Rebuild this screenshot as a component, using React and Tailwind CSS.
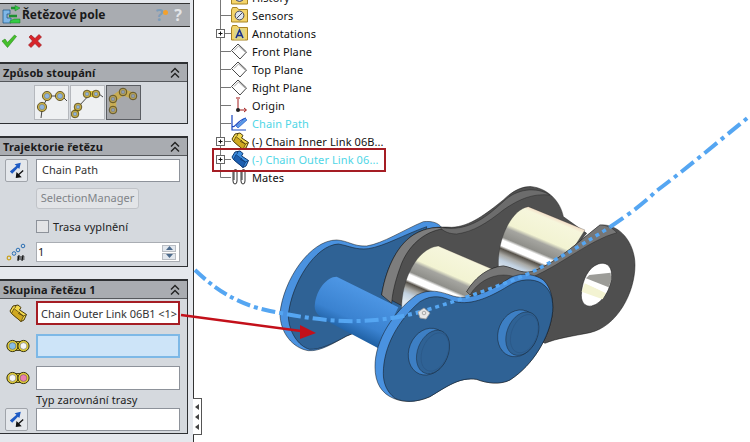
import React from "react";

const font = { fontFamily: '"Noto Sans", "DejaVu Sans", sans-serif' };

function Chevrons() {
  return (
    <svg width="12" height="14" viewBox="0 0 12 14" fill="none" stroke="#222" strokeWidth="1.4">
      <path d="M2 6.5 L6 2.5 L10 6.5" />
      <path d="M2 11.5 L6 7.5 L10 11.5" />
    </svg>
  );
}

function Header({ children }) {
  return (
    <div className="flex h-[18px] items-center justify-between border-b border-[#55585c] bg-[#a9acb1] pl-[3px] pr-[6px]">
      <span className="whitespace-nowrap text-[11px] font-bold leading-none tracking-[0.1px] text-[#1a1a1a]">{children}</span>
      <Chevrons />
    </div>
  );
}

function Group({ title, className, children }) {
  return (
    <div className={"mr-[5px] shrink-0 border border-l-0 border-t-2 border-[#2e3033] bg-[#d5d9de] " + (className || "")}>
      <Header>{title}</Header>
      {children}
    </div>
  );
}

function SelectIcon() {
  return (
    <svg width="23" height="23" viewBox="0 0 22 22" className="shrink-0 rounded-[2px] border border-[#a0a4aa] bg-[#e4e7eb]">
      <path d="M4 12 L11 6 L9 4.5 L15.5 3 L14 9.5 L12.5 8 L6.5 14.5 Z" fill="#1f5bc4" />
      <path d="M18 11 L12.5 16 M11.5 14 L11 18 L15 17.5 Z" stroke="#111" strokeWidth="1.4" fill="#111" />
    </svg>
  );
}

function Ball({ cx, cy, r = 4.6, c = "#8fb4dc", ring = "#c9b045" }) {
  return (
    <g>
      <circle cx={cx} cy={cy} r={r} fill={ring} stroke="#4a3f18" strokeWidth="0.8" />
      <circle cx={cx} cy={cy} r={r - 2} fill={c} stroke="#5f6b7c" strokeWidth="0.4" />
    </g>
  );
}

function ModeIcon({ variant, active }) {
  return (
    <div className={"flex h-[35px] w-[35px] items-center justify-center border " + (active ? "border-[#5a5d62] bg-[#a6a8ac]" : "border-[#b5b8bd] bg-[#eef0f2]")}>
      <svg width="33" height="33" viewBox="0 0 33 33" fill="none">
        {variant === 0 && (
          <g>
            <path d="M6 32 L7 24 M9 18 L12 13 M17 10 L21 10 M29 12 L32 15" stroke="#333" strokeWidth="0.9" />
            <Ball cx={12} cy={10} /><Ball cx={25} cy={10} /><Ball cx={7} cy={21} />
          </g>
        )}
        {variant === 1 && (
          <g>
            <path d="M3 32 L4 28 M20 7 L8 20 M28 8 L32 11" stroke="#333" strokeWidth="0.9" />
            <path d="M16 8 L25 8" stroke="#e4cc3e" strokeWidth="6" />
            <path d="M4 28 L7 21" stroke="#e4cc3e" strokeWidth="6" />
            <Ball cx={16} cy={8} r={3.8} /><Ball cx={25} cy={8} r={3.8} /><Ball cx={7} cy={21} r={3.8} /><Ball cx={4} cy={28} r={3.8} />
          </g>
        )}
        {variant === 2 && (
          <g>
            <path d="M6 13 L16 6 L26 10 M6 13 L6 24" stroke="#c8ad55" strokeWidth="6.5" />
            <Ball cx={6} cy={13} r={3.8} ring="#b8a255" c="#8e9db0" /><Ball cx={16} cy={6} r={3.8} ring="#b8a255" c="#8e9db0" /><Ball cx={26} cy={10} r={3.8} ring="#b8a255" c="#8e9db0" /><Ball cx={6} cy={24} r={3.8} ring="#b8a255" c="#8e9db0" />
          </g>
        )}
      </svg>
    </div>
  );
}

function LinkIcon({ c }) {
  return (
    <svg width="24" height="14" viewBox="0 0 24 14" className="shrink-0">
      <rect x="6" y="2.5" width="12" height="9" fill="#f0dc36" stroke="#3c3612" strokeWidth="0.9" />
      <circle cx="6.5" cy="7" r="5.6" fill="#e2cd36" stroke="#33300f" strokeWidth="1" />
      <circle cx="17.5" cy="7" r="5.6" fill="#e2cd36" stroke="#33300f" strokeWidth="1" />
      <circle cx="6.5" cy="7" r="3.4" fill={c === "l" ? "#86bde6" : "#f6f6f6"} stroke="#555" strokeWidth="0.5" />
      <circle cx="17.5" cy="7" r="3.4" fill={c === "r" ? "#ec7fb0" : "#f6f6f6"} stroke="#555" strokeWidth="0.5" />
    </svg>
  );
}

function PartIcon({ color = "y" }) {
  const a = color === "y" ? "#f3d94e" : "#3f8fe0";
  const b = color === "y" ? "#d0a820" : "#1d5fb0";
  const d = color === "y" ? "#4c3c0c" : "#0e3a72";
  return (
    <svg width="18" height="18" viewBox="0 0 18 18">
      <path d="M1 7 L4 2 L9 1 L12 3.5 L10.5 6 L13 7.5 L17.5 10.5 L15 16 L12 17.5 L2.5 9.5 Z" fill={a} stroke={d} strokeWidth="1" />
      <path d="M2.5 9.5 L12 17.5 L14.5 12 L5 4.5 Z" fill={b} stroke={d} strokeWidth="0.7" />
      <path d="M7 1.5 L6 4 M11 8 L9.5 9.5 L14.5 12 L17.5 10.5" fill="none" stroke={d} strokeWidth="0.8" />
    </svg>
  );
}

function Folder({ children }) {
  return (
    <svg width="17" height="16" viewBox="0 0 17 16">
      <path d="M0.5 3 L0.5 15 L16.5 15 L16.5 2.5 L7.5 2.5 L6 0.5 L1.5 0.5 Z" fill="#f4d46a" stroke="#a88423" />
      {children}
    </svg>
  );
}

function PlaneIcon() {
  return (
    <svg width="17" height="17" viewBox="0 0 17 17" fill="none" stroke="#333" strokeWidth="0.9">
      <path d="M0.5 7.5 L7 1 L15.5 9 L9 16 Z" />
      <path d="M3 7.5 L7.5 3 L14 9" stroke="#999" />
    </svg>
  );
}

function TreeLine({ plus, last }) {
  return (
    <svg width="15" height="18" viewBox="0 0 15 18" className="shrink-0">
      <path d={last ? "M4.5 0 V9.5 H15" : "M4.5 0 V18 M4.5 9.5 H15"} stroke="#777" fill="none" />
      {plus && (
        <g>
          <rect x="0.5" y="5.5" width="8" height="8" fill="#fff" stroke="#666" />
          <path d="M2.5 9.5 H6.5 M4.5 7.5 V11.5" stroke="#111" />
        </g>
      )}
    </svg>
  );
}

function Row({ icon, text, plus, last, cyan }) {
  return (
    <div className="flex h-[18px] items-center">
      <TreeLine plus={plus} last={last} />
      <div className="flex h-[18px] w-[21px] shrink-0 items-center">{icon}</div>
      <span className={"whitespace-nowrap text-[11px] leading-none tracking-[0.1px] " + (cyan ? "text-[#4fd6e6]" : "text-[#111]")}>{text}</span>
    </div>
  );
}

function Tree() {
  return (
    <div className="ml-[22px] mt-[-12px] flex flex-col">
      <Row text="History" icon={<Folder><circle cx="8.5" cy="8.5" r="4" fill="#c8d6ea" stroke="#445" /></Folder>} />
      <Row text="Sensors" icon={<Folder><circle cx="8.5" cy="8.5" r="4.4" fill="#dfe6ee" stroke="#445" /><path d="M6 11 L11 6" stroke="#445" /></Folder>} />
      <Row plus text="Annotations" icon={<Folder><rect x="3" y="3.5" width="11" height="11" fill="#dcd68a" /><path d="M5 13 L8.5 5 L12 13 M6.3 10.5 H10.7" stroke="#1b2f8a" strokeWidth="1.6" fill="none" /></Folder>} />
      <Row text="Front Plane" icon={<PlaneIcon />} />
      <Row text="Top Plane" icon={<PlaneIcon />} />
      <Row text="Right Plane" icon={<PlaneIcon />} />
      <Row text="Origin" icon={
        <svg width="17" height="17" viewBox="0 0 17 17" fill="none">
          <path d="M7 2 V13 H15" stroke="#a31a1a" strokeWidth="1" />
          <path d="M5 1 h4 M13 11 l2.5 2 l-2.5 2" stroke="#a31a1a" />
          <circle cx="7" cy="13" r="2" fill="#222" />
        </svg>
      } />
      <Row cyan text="Chain Path" icon={
        <svg width="17" height="17" viewBox="0 0 17 17" fill="none">
          <path d="M1 0 V15 H15 M1 12 C6 12 5 6 15 3" stroke="#1846c0" strokeWidth="1.2" />
          <path d="M5 11 L14 3 L16 5 L7 13 Z" fill="#5a9be8" stroke="#1846c0" strokeWidth="0.6" />
        </svg>
      } />
      <Row plus text="(-) Chain Inner Link 06B..." icon={<PartIcon />} />
      <Row plus cyan text="(-) Chain Outer Link 06..." icon={<PartIcon color="b" />} />
      <Row last text="Mates" icon={
        <svg width="17" height="16" viewBox="0 0 17 16" fill="none" stroke="#333" strokeWidth="1">
          <path d="M2 3 V12 Q2 15 4 15 Q6 15 6 12 V2 Q6 0.5 4.5 0.5 Q3 0.5 3 2 V11" />
          <path d="M10 3 V12 Q10 15 12 15 Q14 15 14 12 V2 Q14 0.5 12.5 0.5 Q11 0.5 11 2 V11" />
        </svg>
      } />
    </div>
  );
}

function RollStops() {
  return (
    <>
      <stop offset="0" stopColor="#f3dcc6" />
      <stop offset="0.06" stopColor="#f6f6dc" />
      <stop offset="0.36" stopColor="#f2f3d2" />
      <stop offset="0.42" stopColor="#a5a5a0" />
      <stop offset="0.56" stopColor="#8f8f8a" />
      <stop offset="0.6" stopColor="#ffffff" />
      <stop offset="0.68" stopColor="#ffffff" />
      <stop offset="0.72" stopColor="#555048" />
      <stop offset="0.8" stopColor="#a8a8a4" />
      <stop offset="0.88" stopColor="#c2d2e2" />
      <stop offset="1" stopColor="#dfe8f0" />
    </>
  );
}

function Rivet({ x, y }) {
  return (
    <g>
      <ellipse cx={x} cy={y} rx="58" ry="72" transform={`rotate(22 ${x} ${y})`} fill="#3d7fc4" stroke="#111" strokeWidth="1.2" />
      <ellipse cx={x + 14} cy={y + 1} rx="46" ry="68" transform={`rotate(22 ${x + 14} ${y + 1})`} fill="#2f6295" stroke="#111" strokeWidth="1" />
      <ellipse cx={x + 20} cy={y + 1} rx="38" ry="60" transform={`rotate(22 ${x + 20} ${y + 1})`} fill="#2f6295" stroke="#24496f" strokeWidth="0.8" />
    </g>
  );
}

function ChainLink() {
  return (
    <g transform="translate(270 180) scale(0.3333)" strokeLinejoin="round">
      <defs>
        <linearGradient id="pin" x1="290" y1="335" x2="230" y2="465" gradientUnits="userSpaceOnUse">
          <stop offset="0" stopColor="#4d96e4" />
          <stop offset="0.65" stopColor="#3a82d0" />
          <stop offset="1" stopColor="#1c5c9e" />
        </linearGradient>
        <linearGradient id="rollR" x1="790" y1="85" x2="710" y2="275" gradientUnits="userSpaceOnUse"><RollStops /></linearGradient>
        <linearGradient id="rollL" x1="530" y1="200" x2="450" y2="385" gradientUnits="userSpaceOnUse"><RollStops /></linearGradient>
      </defs>

      {/* rear blue plate */}
      <path d="M30 400 C40 300 120 180 200 180 C235 182 250 200 290 198 C340 190 400 150 460 125 C490 122 505 130 515 142 L420 390 L230 468 C190 490 150 515 115 512 C70 505 30 460 30 400 Z" fill="#4a92e0" stroke="#111" strokeWidth="1.5" />
      <path d="M55 405 C65 310 135 196 205 192 C240 198 255 210 295 206 C345 198 400 165 470 140 L420 390 L230 468 C190 490 150 510 118 508 C85 498 55 455 55 405 Z" fill="#2f6295" stroke="#111" strokeWidth="1.5" />

      {/* inner gray link, rear plate */}
      <path d="M335 345 C345 280 375 200 430 165 C470 140 510 140 545 142 C600 140 650 100 700 60 C730 30 760 18 785 20 C830 25 870 60 880 110 L950 160 L820 320 L420 390 L335 345 Z" fill="#505050" stroke="#111" strokeWidth="1.5" />
      <path d="M335 345 C345 280 375 200 430 165 C470 140 510 140 530 145 C470 150 420 190 395 250 C380 290 368 330 365 370 Z" fill="#7d7d7d" stroke="#111" strokeWidth="1.5" />
      <path d="M510 142 C600 160 660 100 700 65 C740 25 800 20 840 45 C790 40 750 55 700 90 C650 130 610 155 560 162 C540 162 520 155 510 142 Z" fill="#6c6c6c" stroke="#111" strokeWidth="1" />

      {/* rollers */}
      <path d="M775 80 L945 150 L850 300 L690 290 C670 210 715 90 775 80 Z" fill="url(#rollR)" stroke="#222" strokeWidth="0.8" />
      <path d="M505 198 L668 268 L600 380 L395 385 C395 300 440 205 505 198 Z" fill="url(#rollL)" stroke="#222" strokeWidth="0.8" />

      {/* front gray plate */}
      <path d="M590 335 C620 285 660 262 700 258 C730 262 750 282 785 275 C850 255 920 190 990 135 C1050 130 1095 190 1095 255 C1095 340 1040 440 960 458 C910 468 860 475 825 490 L700 420 Z" fill="#4f4f4f" stroke="#111" strokeWidth="1.5" />
      <path d="M935 335 C930 365 945 382 965 378 C1000 370 1025 320 1025 285 C1025 255 1005 245 985 252 C955 262 938 300 935 335 Z" fill="#fff" stroke="#111" strokeWidth="1.5" />
      <path d="M958 285 L1022 278 L1024 300 L1016 322 L948 295 Z" fill="#9c9c98" />
      <path d="M945 308 L1008 340 L998 358 L935 335 Z" fill="#f3f3d2" />
      <path d="M948 298 L1015 325 L1009 338 L944 310 Z" fill="#fff" />
      <path d="M590 335 C620 285 660 262 700 258 C730 262 750 282 785 275 C850 255 920 190 990 135 C1010 135 1030 145 1040 158 C960 180 880 250 790 290 C750 300 730 285 700 285 C660 285 620 310 600 345 Z" fill="#767676" stroke="#111" strokeWidth="1" />

      {/* pin */}
      <path d="M135 370 C140 330 170 290 200 290 L385 382 L325 505 L175 425 C145 410 130 395 135 370 Z" fill="url(#pin)" />

      {/* front blue plate */}
      <path d="M315 560 C315 480 370 395 440 345 C480 325 510 335 540 345 C590 365 650 340 710 300 C745 275 790 280 820 300 C845 325 850 360 848 395 C840 470 790 555 720 600 C690 615 650 610 620 598 C570 590 530 620 480 650 C440 668 400 668 370 655 C335 640 315 610 315 560 Z" fill="#4a92e0" stroke="#111" strokeWidth="1.5" />
      <path d="M340 580 C340 500 385 420 450 365 C490 340 520 352 545 362 C595 380 655 355 715 318 C750 295 790 295 815 310 C845 330 850 360 848 395 C840 470 790 555 720 600 C690 615 650 610 620 598 C570 590 530 620 480 650 C440 668 400 668 375 655 C350 635 340 610 340 580 Z" fill="#2f6295" stroke="#111" strokeWidth="1.5" />

      <Rivet x={475} y={515} />
      <Rivet x={743} y={460} />
    </g>
  );
}

function Overlay() {
  return (
    <svg className="pointer-events-none absolute left-0 top-0" width="750" height="442" viewBox="0 0 750 442" fill="none">
      <ChainLink />
      <path d="M195 270 C222 296 246 306 270 311 C300 317 330 322 360 321 C385 320 400 317 420 312" stroke="#55a6f2" strokeWidth="4" strokeDasharray="14 4 4 4" />
      <path d="M420 312 C450 303 490 290 530 273 C560 258 590 240 610 227" stroke="#55a6f2" strokeWidth="3.5" strokeDasharray="4 4" />
      <path d="M610 227 C630 214 650 198 655 192 C690 166 720 140 750 116" stroke="#55a6f2" strokeWidth="4" strokeDasharray="16 5 4 5" />
      <g stroke="#9a9a9a" fill="#e8e8e8" strokeWidth="0.8">
        <path d="M418 312 L424 308 L430 313 L426 319 L420 318 Z" />
        <circle cx="424" cy="313" r="1.8" />
      </g>
      <path d="M181 315 L301 331" stroke="#c3101a" strokeWidth="2.5" />
      <path d="M300 325 L316 333 L300 339 Z" fill="#c3101a" />
    </svg>
  );
}

function Panel() {
  return (
    <div className="flex w-[194px] shrink-0 flex-col border-r border-[#333] bg-[#e5e8ed] pt-[3px]">
      <div className="mr-[3px] flex h-[24px] shrink-0 items-center border-y border-[#333] bg-[#a9acb1] pl-[1px] pr-[8px]">
        <svg width="20" height="20" viewBox="0 0 20 20" className="shrink-0">
          <path d="M2 5 H9 V9 H6 V13 H10 V18 H2 Z" fill="#7fb7e8" stroke="#17507f" strokeWidth="0.7" />
          <path d="M10 3 H16 M8 11 H16" stroke="#1f8f2f" strokeWidth="2.5" fill="none" />
          <path d="M14 0.5 L19 3 L14 6 Z M13 14 H19 V18 H9 V16 Z" fill="#33cc44" stroke="#187a25" strokeWidth="0.5" />
        </svg>
        <span className="ml-[1px] flex-1 text-[12px] font-bold leading-none text-[#1a1a1a]">Řetězové pole</span>
        <span className="text-[16px] font-bold leading-none text-[#7d9db8]">?</span>
        <span className="mr-[6px] mt-[-6px] h-[5px] w-[5px] rounded-full bg-[#f2a12e]" />
        <span className="text-[16px] font-bold leading-none text-[#e3e5e8]">?</span>
      </div>
      <div className="flex h-[35px] shrink-0 items-start gap-[11px] pl-[1px] pt-[7px]">
        <svg width="16" height="14" viewBox="0 0 16 14">
          <path d="M1 7 L4 5 L6.5 8.5 L13.5 1 L15.5 2.5 L6.5 13.5 Z" fill="#45c02c" stroke="#2a8a1b" strokeWidth="0.6" />
        </svg>
        <svg width="14" height="14" viewBox="0 0 14 14">
          <path d="M1 3 L3 1 L7 4.5 L11 0.5 L13.5 3 L9.5 7 L13.5 11 L11 13.5 L7 9.5 L3 13.5 L0.5 11 L4.5 7 Z" fill="#d8242a" stroke="#8f1216" strokeWidth="0.6" />
        </svg>
      </div>

      <Group title="Způsob stoupání">
        <div className="flex h-[41px] items-center gap-[1px] pl-[34px]">
          <ModeIcon variant={0} />
          <ModeIcon variant={1} />
          <ModeIcon variant={2} active />
        </div>
      </Group>

      <Group title="Trajektorie řetězu" className="mt-[12px]">
        <div className="flex flex-col pb-[4px] pl-[5px] pr-[7px] pt-[3px]">
          <div className="flex items-start gap-[8px]">
            <SelectIcon />
            <div className="flex h-[23px] flex-1 items-center border border-[#8d929a] bg-white pl-[5px] text-[11px] text-[#333]">Chain Path</div>
          </div>
          <div className="ml-[31px] mt-[6px] flex h-[21px] w-[103px] items-center justify-center rounded-[3px] border border-[#c0c3c8] bg-[#e2e4e7] text-[11px] text-[#808387]">SelectionManager</div>
          <div className="ml-[31px] mt-[11px] flex h-[13px] items-center gap-[4px]">
            <span className="h-[13px] w-[13px] border border-[#8d929a] bg-[#e3e4e6]" />
            <span className="text-[11px] leading-none tracking-[0.1px] text-[#222]">Trasa vyplnění</span>
          </div>
          <div className="mt-[9px] flex items-center gap-[9px]">
            <svg width="22" height="20" viewBox="0 0 22 20" className="shrink-0" fill="none">
              <circle cx="4" cy="16" r="1.8" stroke="#c9a21f" strokeWidth="1.2" />
              <circle cx="9" cy="11.5" r="1.8" stroke="#2c6fb3" strokeWidth="1" />
              <circle cx="13" cy="8" r="1.8" stroke="#2c6fb3" strokeWidth="1" />
              <circle cx="18" cy="4" r="1.8" stroke="#2c6fb3" strokeWidth="1" />
              <path d="M14 13 L13 19 M18 13 L17 19 M12 15 H19.5 M12 17 H19.5" stroke="#111" strokeWidth="1.1" />
            </svg>
            <div className="flex h-[20px] flex-1 items-center justify-between border border-[#a9adb3] bg-white pl-[1px] pr-[3px] text-[11px] text-[#222]">
              <span>1</span>
              <div className="flex h-[15px] w-[14px] flex-col gap-[1px]">
                <div className="flex flex-1 items-center justify-center border border-[#b9bdc3] bg-[#e3e8ee]">
                  <svg width="7" height="4" viewBox="0 0 7 4"><path d="M0 4 L3.5 0 L7 4 Z" fill="#4c6a8c" /></svg>
                </div>
                <div className="flex flex-1 items-center justify-center border border-[#b9bdc3] bg-[#e3e8ee]">
                  <svg width="7" height="4" viewBox="0 0 7 4"><path d="M0 0 L3.5 4 L7 0 Z" fill="#4c6a8c" /></svg>
                </div>
              </div>
            </div>
          </div>
        </div>
      </Group>

      <Group title="Skupina řetězu 1" className="mt-[12px]">
        <div className="flex flex-col pb-[2px] pl-[4px] pr-[7px] pt-[2px]">
          <div className="flex items-center gap-[5px]">
            <div className="flex w-[27px] justify-center"><PartIcon /></div>
            <div className="flex h-[24px] min-w-0 flex-1 items-center overflow-hidden whitespace-nowrap border-2 border-[#a51d24] bg-white pl-[3px] text-[11px] leading-none tracking-[-0.05px] text-[#333]">Chain Outer Link 06B1 &lt;1&gt;</div>
          </div>
          <div className="mt-[9px] flex items-center gap-[5px]">
            <div className="flex w-[27px] justify-center"><LinkIcon c="l" /></div>
            <div className="h-[24px] flex-1 border-2 border-[#7db8e6] bg-[#cde4f8]" />
          </div>
          <div className="mt-[8px] flex items-center gap-[5px]">
            <div className="flex w-[27px] justify-center"><LinkIcon c="r" /></div>
            <div className="h-[24px] flex-1 border border-[#8d929a] bg-white" />
          </div>
          <div className="ml-[32px] mt-[2px] h-[16px] text-[11px] leading-[16px] tracking-[0.1px] text-[#222]">Typ zarovnání trasy</div>
          <div className="flex items-center gap-[8px] pl-[1px]">
            <SelectIcon />
            <div className="h-[23px] flex-1 border border-[#8d929a] bg-white" />
          </div>
        </div>
      </Group>
    </div>
  );
}

export default function App() {
  return (
    <div className="relative flex h-[442px] w-[750px] overflow-hidden bg-white" style={font}>
      <Panel />
      <div className="min-w-0 flex-1">
        <Tree />
      </div>
      <div className="absolute left-[212px] top-[148px] h-[24px] w-[174px] border-2 border-[#a51d24]" />
      <div className="absolute left-[193px] top-[398px] flex h-[37px] w-[9px] flex-col items-center justify-center gap-[4px] border border-l-0 border-[#555] bg-white">
        {[0, 1, 2].map((i) => (
          <svg key={i} width="4" height="6" viewBox="0 0 4 6"><path d="M4 0 L0 3 L4 6 Z" fill="#444" /></svg>
        ))}
      </div>
      <Overlay />
    </div>
  );
}
